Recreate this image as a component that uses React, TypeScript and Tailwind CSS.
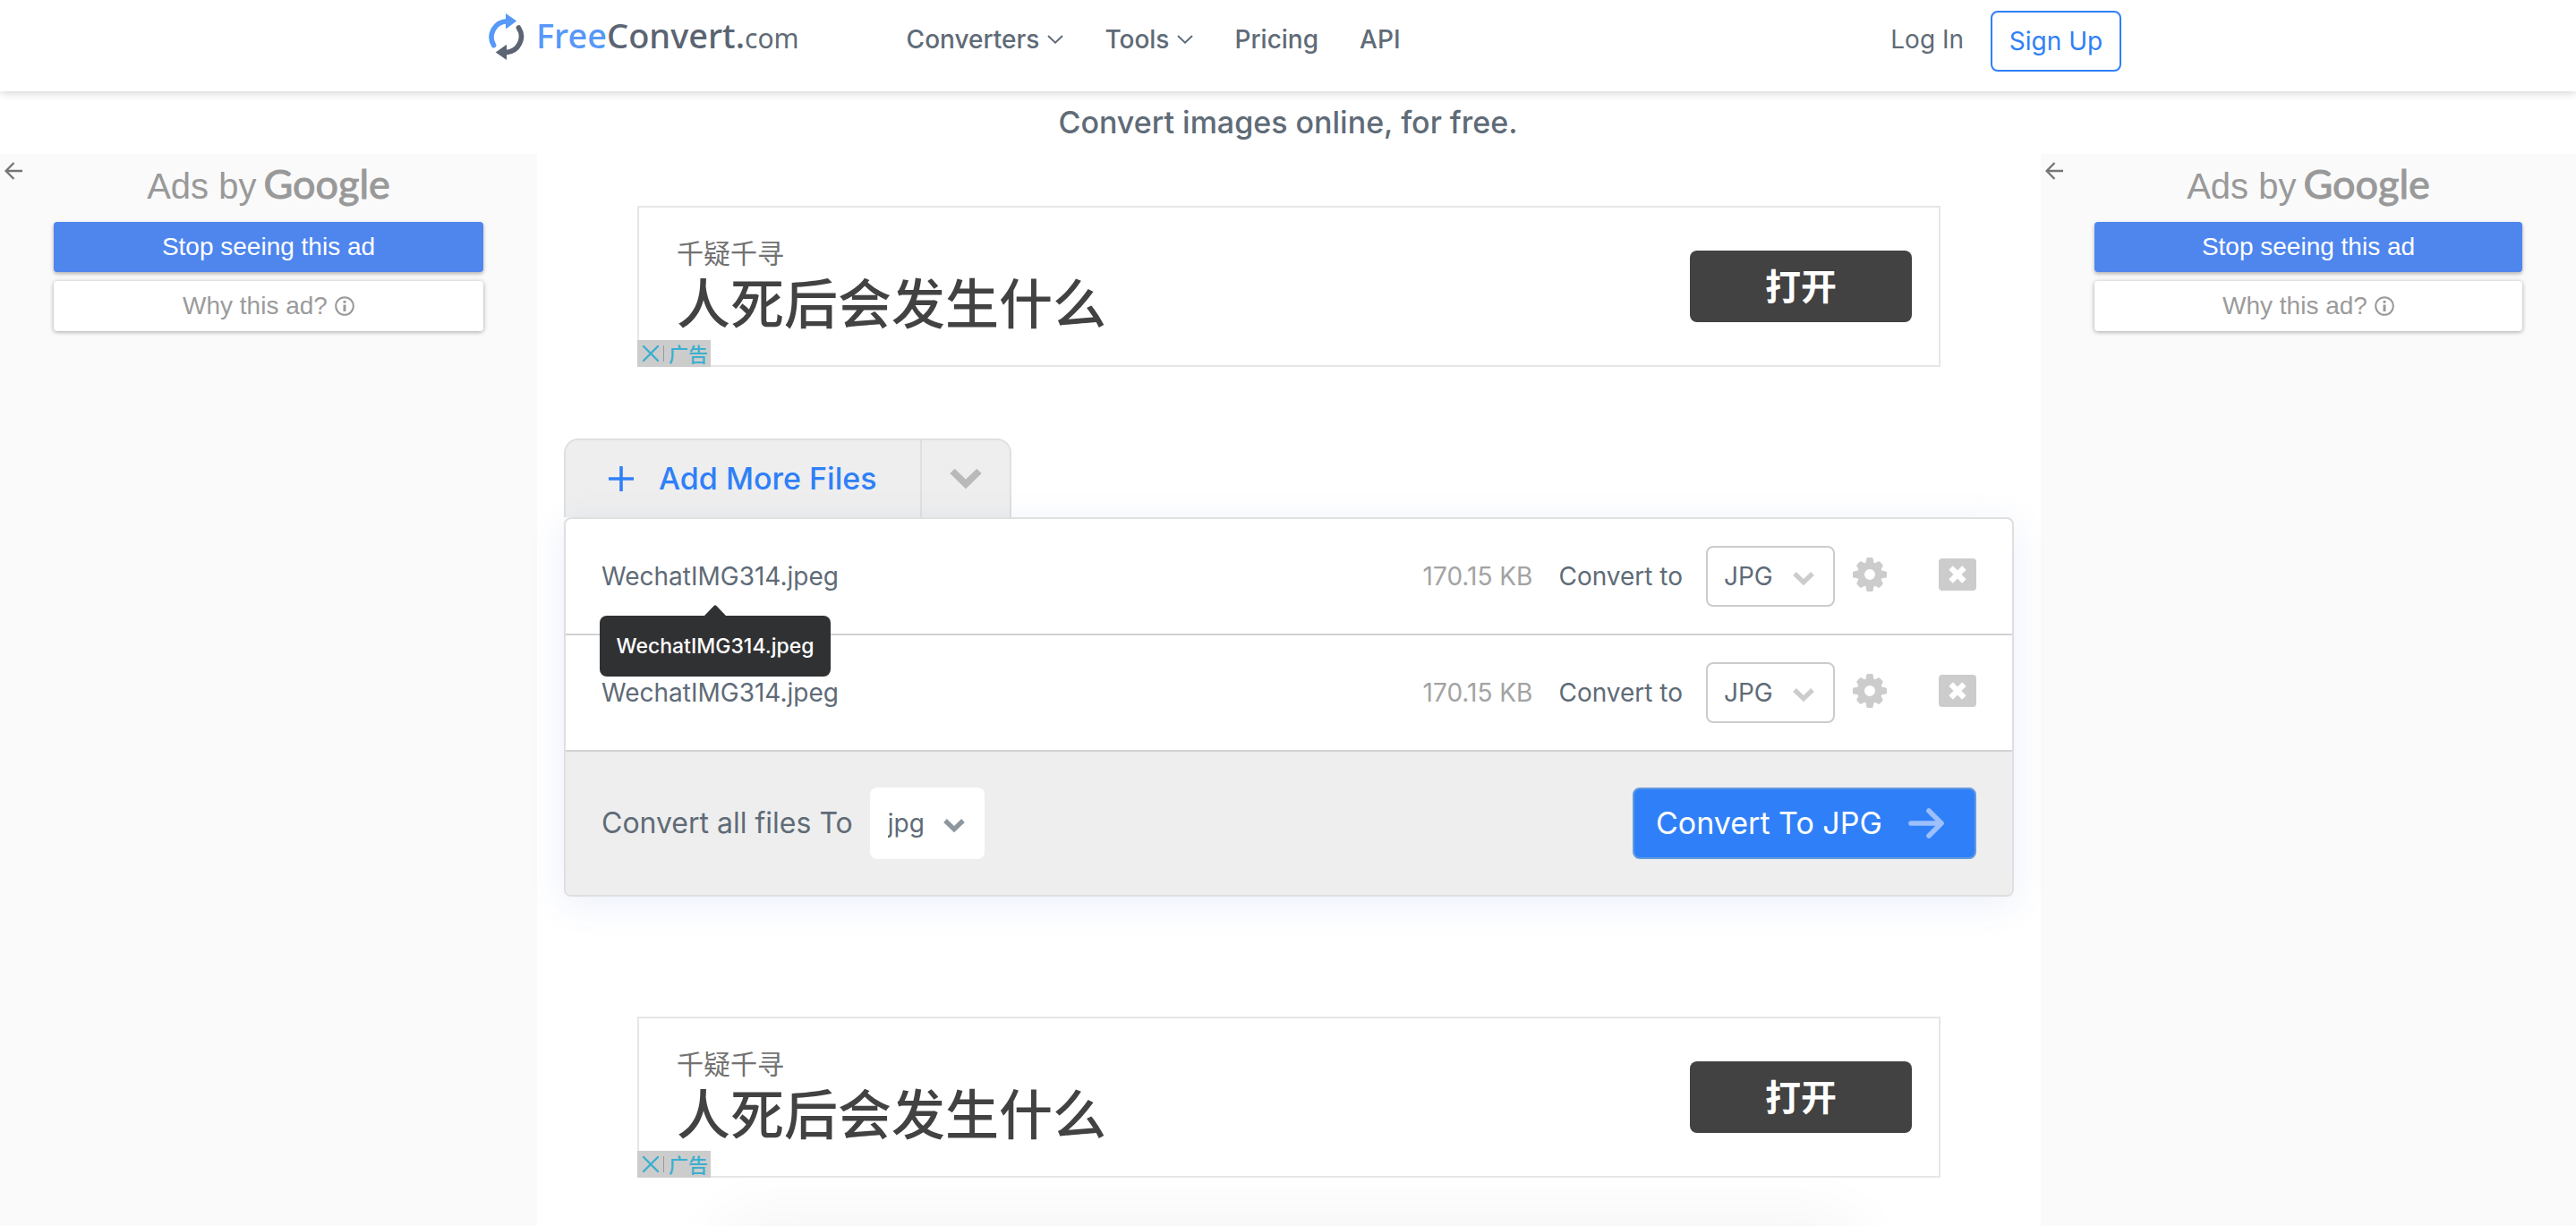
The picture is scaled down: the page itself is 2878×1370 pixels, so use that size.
import React from "react";

const NAV = [
  { label: "Converters", menu: true },
  { label: "Tools", menu: true },
  { label: "Pricing", menu: false },
  { label: "API", menu: false },
];

const FILES = [
  { id: "file-1", name: "WechatIMG314.jpeg", size: "170.15 KB", tooltip: true },
  { id: "file-2", name: "WechatIMG314.jpeg", size: "170.15 KB", tooltip: false },
];

function LogoMark() {
  return (
    <svg width="42" height="52" viewBox="0 0 42 52" fill="none" aria-hidden="true">
      <path d="M6.6 35.6A17.8 17.8 0 0 1 21 8.7" stroke="#5798f8" strokeWidth="5.6" strokeLinecap="round" />
      <path d="M20 0 32.2 8.6 20 17.4Z" fill="#5798f8" />
      <path d="M34.4 16A17.8 17.8 0 0 1 20.5 43.6" stroke="#5a6472" strokeWidth="5.6" strokeLinecap="round" />
      <path d="M21 34.8 8.8 43.6 21 52Z" fill="#5a6472" />
    </svg>
  );
}

function ThinChevron() {
  return (
    <svg width="18" height="10" viewBox="0 0 18 10" fill="none" aria-hidden="true">
      <path d="M1 1 9 8.6 17 1" stroke="#5f6b77" strokeWidth="2" />
    </svg>
  );
}

function SelectChevron({ className }: { className: string }) {
  return (
    <svg className={className} width="26" height="17" viewBox="0 0 26 17" fill="none" aria-hidden="true">
      <path d="M3 3 13 12.6 23 3" stroke="currentColor" strokeWidth="5.2" />
    </svg>
  );
}

function Gear() {
  return (
    <svg width="38" height="38" viewBox="-19 -19 38 38" fill="#ccc" aria-hidden="true">
      <path
        fillRule="evenodd"
        d="M0-14A14 14 0 1 1 0 14 14 14 0 1 1 0-14ZM0-6A6 6 0 1 0 0 6 6 6 0 1 0 0-6Z"
      />
      {[0, 90, 180, 270].map((a) => (
        <path key={a} transform={`rotate(${a})`} d="M-4.6-12.5-3.6-18Q-3.4-19-2.4-19H2.4Q3.4-19 3.6-18L4.6-12.5Z" />
      ))}
      {[45, 135, 225, 315].map((a) => (
        <path key={a} transform={`rotate(${a})`} d="M-5-12-3.8-16.6Q-3.4-18-2-18H2Q3.4-18 3.8-16.6L5-12Z" />
      ))}
    </svg>
  );
}

function CloseBox() {
  return (
    <svg width="42" height="36" viewBox="0 0 42 36" fill="none" aria-hidden="true">
      <rect width="42" height="36" rx="4" fill="#ccc" />
      <path d="M13.6 10.6 28.4 25.4M28.4 10.6 13.6 25.4" stroke="#fff" strokeWidth="6.4" />
    </svg>
  );
}

function Header() {
  return (
    <header className="relative z-10 h-[102px] bg-white shadow-[0_1px_10px_rgba(0,0,0,0.2)]">
      <div className="mx-auto flex max-w-[1862px] items-start pl-[37px] text-[28px] leading-[36px] text-[#5f6b77]">
        <a href="#" className="flex h-[82px] items-center gap-[12px]">
          <LogoMark />
          <span className="flex items-baseline font-['Noto_Sans',sans-serif] text-[38px] font-medium text-[#5a6472]">
            <span className="text-[#5798f8]">Free</span>
            <span>Convert.</span>
            <span className="text-[30px] font-normal text-[#5f6b77]">com</span>
          </span>
        </a>
        <nav className="ml-[120px] flex h-[88px] items-center gap-[46px] font-medium">
          {NAV.map((item) =>
            item.menu ? (
              <button key={item.label} type="button" className="flex items-center gap-[9px]">
                {item.label}
                <ThinChevron />
              </button>
            ) : (
              <a key={item.label} href="#">
                {item.label}
              </a>
            ),
          )}
        </nav>
        <a href="#" className="ml-auto mr-[30px] flex h-[88px] items-center">
          Log In
        </a>
        <a
          href="#"
          className="mt-3 flex h-[68px] w-[146px] items-center justify-center rounded-lg border-2 border-[#2f80f8] text-[#2f80f8]"
        >
          Sign Up
        </a>
      </div>
    </header>
  );
}

function SideAd() {
  return (
    <aside className="bg-[#fafafa] pt-[9px] font-['Liberation_Sans',Arial,sans-serif]">
      <div className="relative flex h-[67px] items-start justify-center">
        <button type="button" aria-label="Back" className="absolute left-[5px] top-0">
          <svg width="20" height="20" viewBox="0 0 20 20" fill="none" aria-hidden="true">
            <path d="M20 10H2M10.5 1 1.6 10 10.5 19" stroke="#757575" strokeWidth="2.4" />
          </svg>
        </button>
        <p className="flex items-baseline gap-[8px] text-[40px] leading-[48px] text-[#999]">
          <span>Ads by</span>
          <span className="font-['Lato',sans-serif] text-[45px] [-webkit-text-stroke:1px_#999]">Google</span>
        </p>
      </div>
      <div className="mx-[60px] flex flex-col gap-[10px] text-[28px]">
        <button
          type="button"
          className="h-14 rounded bg-[#4e86ee] text-white shadow-[0_2px_4px_rgba(0,0,0,0.3)]"
        >
          Stop seeing this ad
        </button>
        <button
          type="button"
          className="flex h-14 items-center justify-center gap-[8px] rounded bg-white text-[#9b9b9b] shadow-[0_1px_5px_rgba(0,0,0,0.35)]"
        >
          Why this ad?
          <svg width="22" height="22" viewBox="0 0 22 22" fill="none" aria-hidden="true">
            <circle cx="11" cy="11" r="9.8" stroke="#999" strokeWidth="2" />
            <path d="M11 9.6V17M11 5V7.8" stroke="#999" strokeWidth="3" />
          </svg>
        </button>
      </div>
    </aside>
  );
}

function BannerAd() {
  return (
    <section className="relative mx-[112px] flex h-[180px] items-center justify-between border-2 border-[#e5e6e7] bg-white pl-[42px] pr-[30px] font-['Noto_Sans_CJK_SC',sans-serif]">
      <div className="pb-3">
        <p className="text-[30px] leading-[44px] text-[#727272]">千疑千寻</p>
        <h2 className="text-[60px] font-medium leading-[66px] text-[#424242]">人死后会发生什么</h2>
      </div>
      <button
        type="button"
        className="h-20 w-[248px] rounded-lg bg-[#424242] pb-1 text-[40px] font-bold leading-[48px] text-white"
      >
        打开
      </button>
      <div className="absolute -bottom-0.5 -left-0.5 flex h-[30px] w-[82px] items-center gap-[5px] bg-[#ccc] pl-[6px] text-[22px] font-medium leading-[26px] text-[#3bafcf]">
        <svg width="18" height="18" viewBox="0 0 18 18" fill="none" aria-hidden="true">
          <path d="M1 1 17 17M17 1 1 17" stroke="#3bafcf" strokeWidth="2.4" strokeLinecap="round" />
        </svg>
        <span className="h-[18px] w-px bg-[#999]" />
        <span className="pb-0.5">广告</span>
      </div>
    </section>
  );
}

function FileRow({ file }: { file: (typeof FILES)[number] }) {
  return (
    <li className="flex h-[130px] items-center border-b-2 border-[#d2d2d2] px-10 text-[28px] leading-[36px]">
      <div className="relative mr-auto">
        <span>{file.name}</span>
        {file.tooltip && (
          <div
            role="tooltip"
            className="absolute -left-0.5 top-full z-10 mt-[26px] flex h-[68px] w-[258px] items-center justify-center rounded-lg bg-[#303133] text-[23px] font-medium text-white"
          >
            <svg
              className="absolute -top-3 left-1/2 -translate-x-1/2"
              width="24"
              height="13"
              viewBox="0 0 24 13"
              fill="#303133"
              aria-hidden="true"
            >
              <path d="M0 13V12L10.6 1Q12-.4 13.4 1L24 12V13Z" />
            </svg>
            {file.name}
          </div>
        )}
      </div>
      <span className="mr-[29px] text-[#a3a3a3]">{file.size}</span>
      <label htmlFor={file.id} className="mr-[26px]">
        Convert to
      </label>
      <div className="relative mr-[20px]">
        <select
          id={file.id}
          className="h-[68px] w-[144px] appearance-none rounded-lg border-2 border-[#ccc] bg-white pl-[18px]"
        >
          <option>JPG</option>
        </select>
        <SelectChevron className="pointer-events-none absolute right-[22px] top-[28px] text-[#ccc]" />
      </div>
      <div className="flex items-center gap-[58px] pb-1">
        <button type="button" aria-label="Settings">
          <Gear />
        </button>
        <button type="button" aria-label="Remove file">
          <CloseBox />
        </button>
      </div>
    </li>
  );
}

function Converter() {
  return (
    <section className="mx-[30px]">
      <div className="flex h-[88px] w-[500px] rounded-t-2xl border-2 border-b-0 border-[#dfdfdf] bg-[#eee]">
        <button
          type="button"
          className="flex flex-1 items-center gap-[28px] border-r-2 border-[#dfdfdf] pl-[48px] text-[34px] font-medium leading-[44px] text-[#2f80f8]"
        >
          <svg width="28" height="28" viewBox="0 0 28 28" aria-hidden="true">
            <path d="M14 0V28M0 14H28" stroke="#2f80f8" strokeWidth="3.6" />
          </svg>
          Add More Files
        </button>
        <button type="button" aria-label="More sources" className="flex w-[98px] items-center justify-center">
          <svg width="36" height="24" viewBox="0 0 36 24" fill="none" aria-hidden="true">
            <path d="M3 3.4 18 18 33 3.4" stroke="#b9b9b9" strokeWidth="7.6" />
          </svg>
        </button>
      </div>
      <div className="relative rounded-lg border-2 border-[#dfdfdf] bg-white text-[#5f6b77] shadow-[0_8px_40px_rgba(58,96,220,0.1)]">
        <ul>
          {FILES.map((file) => (
            <FileRow key={file.id} file={file} />
          ))}
        </ul>
        <div className="flex h-[160px] items-center rounded-b-md bg-[#eee] px-10">
          <label htmlFor="all-files" className="mr-[19px] text-[32px] leading-[44px]">
            Convert all files To
          </label>
          <div className="relative mr-auto">
            <select
              id="all-files"
              className="h-20 w-[128px] appearance-none rounded-lg bg-white pl-[20px] text-[28px]"
            >
              <option>jpg</option>
            </select>
            <SelectChevron className="pointer-events-none absolute right-[21px] top-[34px] text-[#8d979f]" />
          </div>
          <button
            type="button"
            className="flex h-20 w-[384px] items-center justify-between rounded-lg border-2 border-[#649ade] bg-[#2f80f8] pl-6 pr-[34px] text-[34px] leading-[44px] text-white"
          >
            Convert To JPG
            <svg width="40" height="34" viewBox="0 0 40 34" fill="none" aria-hidden="true">
              <path
                d="M3 17H36M23 3 37 17 23 31"
                stroke="#9dbffb"
                strokeWidth="5.6"
                strokeLinecap="round"
                strokeLinejoin="round"
              />
            </svg>
          </button>
        </div>
      </div>
    </section>
  );
}

export default function App() {
  return (
    <div className="flex min-h-screen flex-col bg-white font-['Inter','Noto_Sans_CJK_SC',sans-serif]">
      <Header />
      <h1 className="text-center text-[34px] font-medium leading-[70px] text-[#5f6b77]">
        Convert images online, for free.
      </h1>
      <div className="grid flex-1 grid-cols-[600px_1fr_598px]">
        <SideAd />
        <main className="flex flex-col pt-[58px]">
          <BannerAd />
          <div className="mb-[134px] mt-20">
            <Converter />
          </div>
          <BannerAd />
          <div className="h-[54px] overflow-hidden pt-[54px]">
            <div className="mx-[210px] h-20 shadow-[0_0_80px_rgba(0,0,0,0.06)]" />
          </div>
        </main>
        <SideAd />
      </div>
    </div>
  );
}
